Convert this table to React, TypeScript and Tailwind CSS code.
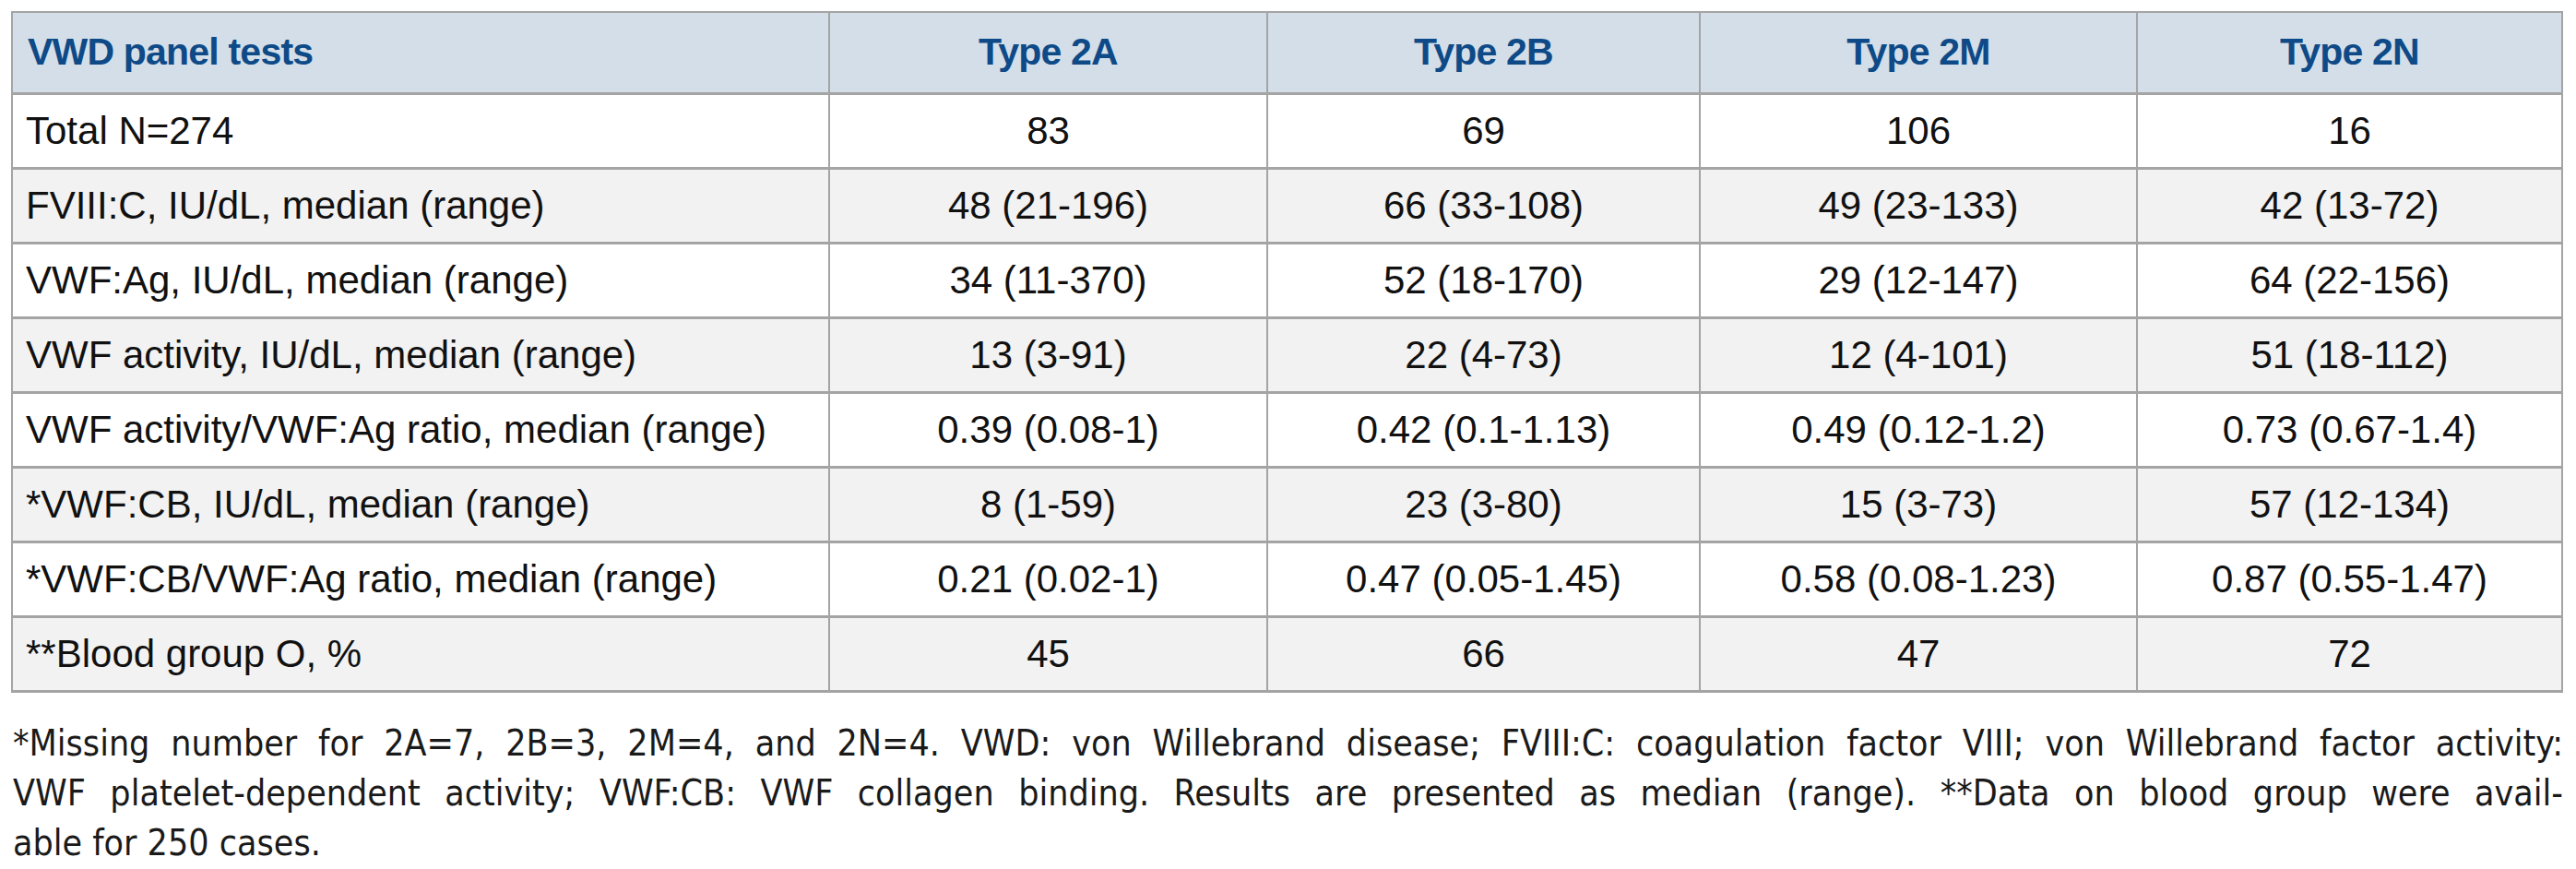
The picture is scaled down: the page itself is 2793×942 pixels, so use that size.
const columns = ["VWD panel tests", "Type 2A", "Type 2B", "Type 2M", "Type 2N"];

const rows: string[][] = [
  ["Total N=274", "83", "69", "106", "16"],
  ["FVIII:C, IU/dL, median (range)", "48 (21-196)", "66 (33-108)", "49 (23-133)", "42 (13-72)"],
  ["VWF:Ag, IU/dL, median (range)", "34 (11-370)", "52 (18-170)", "29 (12-147)", "64 (22-156)"],
  ["VWF activity, IU/dL, median (range)", "13 (3-91)", "22 (4-73)", "12 (4-101)", "51 (18-112)"],
  ["VWF activity/VWF:Ag ratio, median (range)", "0.39 (0.08-1)", "0.42 (0.1-1.13)", "0.49 (0.12-1.2)", "0.73 (0.67-1.4)"],
  ["*VWF:CB, IU/dL, median (range)", "8 (1-59)", "23 (3-80)", "15 (3-73)", "57 (12-134)"],
  ["*VWF:CB/VWF:Ag ratio, median (range)", "0.21 (0.02-1)", "0.47 (0.05-1.45)", "0.58 (0.08-1.23)", "0.87 (0.55-1.47)"],
  ["**Blood group O, %", "45", "66", "47", "72"],
];

const colWidths = ["w-[886px]", "w-[475px]", "w-[469px]", "w-[474px]", "w-[461px]"];

export default function App() {
  return (
    <div className="w-[2793px] h-[942px] bg-white pl-[12px] pt-[12px] pr-[14px] font-['Liberation_Sans',Arial,sans-serif] overflow-hidden">
      <table className="table-fixed border-collapse w-[2767px] border-2 border-[#a4a4a4]">
        <colgroup>
          {colWidths.map((w, i) => (
            <col key={i} className={w} />
          ))}
        </colgroup>
        <thead>
          <tr className="bg-[#d3dee8] h-[88px]">
            {columns.map((c, i) => (
              <th
                key={c}
                className={
                  "border-x-2 border-b-[3px] border-[#a4a4a4] text-[41px] font-bold text-[#0e4a87] tracking-[-0.8px] " +
                  (i === 0 ? "text-left pl-[16px]" : "text-center")
                }
              >
                {c}
              </th>
            ))}
          </tr>
        </thead>
        <tbody>
          {rows.map((r, ri) => (
            <tr key={ri} className={"h-[81px] " + (ri % 2 === 0 ? "bg-white" : "bg-[#f2f2f2]")}>
              {r.map((cell, ci) => (
                <td
                  key={ci}
                  className={
                    "border-x-2 border-b-[3px] border-[#a4a4a4] text-[42px] text-[#111] " +
                    (ci === 0 ? "text-left pl-[14px]" : "text-center")
                  }
                >
                  {cell}
                </td>
              ))}
            </tr>
          ))}
        </tbody>
      </table>

      {/* footnote: condensed face, justified like the print layout */}
      <div className="mt-[28px] pl-[2px] text-[39px] leading-[54px] text-[#1a1a1a] font-['DejaVu_Sans_Condensed','Liberation_Sans',sans-serif]">
        <div className="text-justify [text-align-last:justify] whitespace-nowrap">
          *Missing number for 2A=7, 2B=3, 2M=4, and 2N=4. VWD: von Willebrand disease; FVIII:C: coagulation factor VIII; von Willebrand factor activity:
        </div>
        <div className="text-justify [text-align-last:justify] whitespace-nowrap">
          VWF platelet-dependent activity; VWF:CB: VWF collagen binding. Results are presented as median (range). **Data on blood group were avail-
        </div>
        <div>able for 250 cases.</div>
      </div>
    </div>
  );
}
